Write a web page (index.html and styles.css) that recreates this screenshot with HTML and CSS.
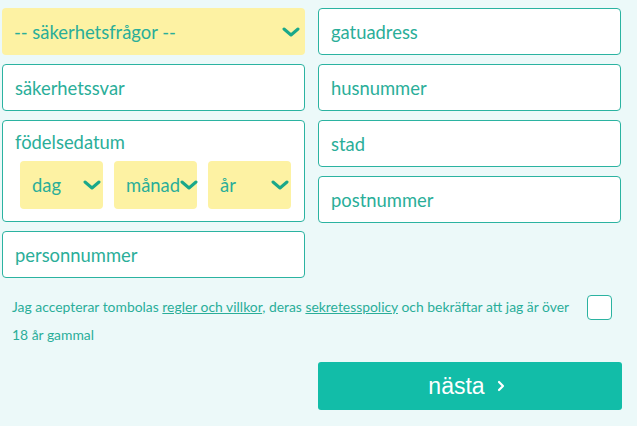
FILE: index.html
```html
<!DOCTYPE html>
<html lang="sv">
<head>
<meta charset="utf-8">
<link rel="stylesheet" href="styles.css">
</head>
<body>
<div class="page">
  <div class="grid">
    <div class="col">
      <div class="select big">
        <span>-- säkerhetsfrågor --</span>
        <svg class="chev" width="18" height="10" viewBox="0 0 18 10"><path d="M2 2 L9 8 L16 2" fill="none" stroke="#1aa88a" stroke-width="3" stroke-linecap="round" stroke-linejoin="round"/></svg>
      </div>
      <div class="field">säkerhetssvar</div>
      <div class="birth">
        <div class="birth-label">födelsedatum</div>
        <div class="birth-row">
          <div class="select small"><span>dag</span><svg class="chev" width="18" height="10" viewBox="0 0 18 10"><path d="M2 2 L9 8 L16 2" fill="none" stroke="#1aa88a" stroke-width="3" stroke-linecap="round" stroke-linejoin="round"/></svg></div>
          <div class="select small"><span>månad</span><svg class="chev" width="18" height="10" viewBox="0 0 18 10"><path d="M2 2 L9 8 L16 2" fill="none" stroke="#1aa88a" stroke-width="3" stroke-linecap="round" stroke-linejoin="round"/></svg></div>
          <div class="select small"><span>år</span><svg class="chev" width="18" height="10" viewBox="0 0 18 10"><path d="M2 2 L9 8 L16 2" fill="none" stroke="#1aa88a" stroke-width="3" stroke-linecap="round" stroke-linejoin="round"/></svg></div>
        </div>
      </div>
      <div class="field">personnummer</div>
    </div>
    <div class="col">
      <div class="field">gatuadress</div>
      <div class="field">husnummer</div>
      <div class="field">stad</div>
      <div class="field">postnummer</div>
    </div>
  </div>
  <div class="terms">
    <p class="terms-text">Jag accepterar tombolas <a href="#">regler och villkor</a>, deras <a href="#">sekretesspolicy</a> och bekräftar att jag är över 18 år gammal</p>
    <span class="checkbox"></span>
  </div>
  <div class="actions">
    <button class="next">nästa <svg width="10" height="14" viewBox="0 0 10 14"><path d="M3 3 L7 7 L3 11" fill="none" stroke="#fff" stroke-width="2.2" stroke-linecap="round" stroke-linejoin="round"/></svg></button>
  </div>
</div>
</body>
</html>
```
FILE: styles.css
```css
html, body {
  margin: 0;
  padding: 0;
  background: #ecf9f9;
}
body {
  font-family: Lato, "Open Sans", sans-serif;
  color: #2aae99;
  width: 637px;
  height: 426px;
  overflow: hidden;
}
.page {
  padding: 8px 0 0 2px;
}
.grid {
  display: grid;
  grid-template-columns: 303px 303px;
  column-gap: 13px;
}
.col {
  display: flex;
  flex-direction: column;
  gap: 9px;
}
.field {
  box-sizing: border-box;
  height: 47px;
  background: #fff;
  border: 1px solid #2bb3a1;
  border-radius: 4px;
  padding: 0 12px;
  display: flex;
  align-items: center;
  font-size: 18.4px;
}
.select {
  box-sizing: border-box;
  background: #fdf2a3;
  border-radius: 4px;
  display: flex;
  align-items: center;
  justify-content: space-between;
  font-size: 18.4px;
}
.select.big {
  height: 47px;
  padding: 0 5px 0 12px;
}
.birth {
  box-sizing: border-box;
  height: 102px;
  background: #fff;
  border: 1px solid #2bb3a1;
  border-radius: 4px;
  padding: 10px 12px 0 12px;
}
.birth-label {
  font-size: 18.4px;
  line-height: 22px;
}
.birth-row {
  display: flex;
  gap: 11px;
  margin-top: 8px;
  padding-left: 5px;
}
.select.small {
  width: 83px;
  height: 48px;
  padding: 0 2px 0 12px;
}
.select.small .chev {
  flex-shrink: 0;
}
.terms {
  display: flex;
  align-items: flex-start;
  margin-top: 15px;
  padding-left: 10px;
}
.terms-text {
  margin: 0;
  width: 570px;
  font-size: 13.9px;
  line-height: 28px;
}
.terms-text a {
  color: #2aae99;
  text-decoration: underline;
}
.checkbox {
  box-sizing: border-box;
  width: 25px;
  height: 25px;
  background: #fff;
  border: 1px solid #2bb3a1;
  border-radius: 4px;
  margin-left: 5px;
  margin-top: 2px;
}
.actions {
  display: flex;
  justify-content: flex-end;
  padding-right: 15px;
  margin-top: 13px;
}
.next {
  width: 304px;
  height: 48px;
  background: #12bda8;
  border: none;
  border-radius: 3px;
  color: #fff;
  font-family: "Liberation Sans", Arial, sans-serif;
  font-size: 23px;
  display: flex;
  align-items: center;
  justify-content: center;
  gap: 11px;
  padding: 0 6px 0 0;
}
```
